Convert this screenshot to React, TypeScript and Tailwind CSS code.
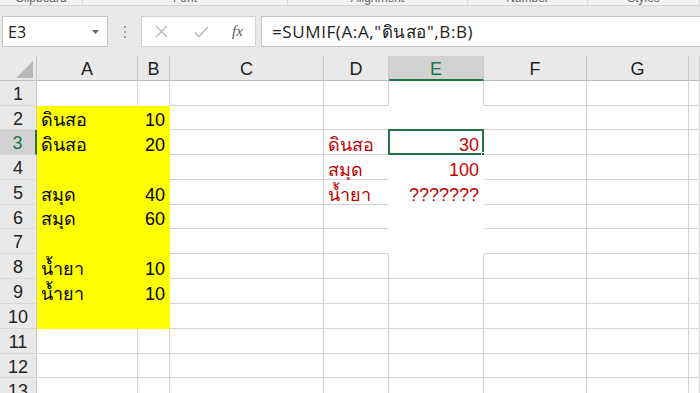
import React from "react";

const COLS = [
  { key: "hdr", w: "w-[37px]" },
  { key: "A", w: "w-[101px]" },
  { key: "B", w: "w-[32px]" },
  { key: "C", w: "w-[154px]" },
  { key: "D", w: "w-[65px]" },
  { key: "E", w: "w-[95px]" },
  { key: "F", w: "w-[103px]" },
  { key: "G", w: "w-[102px]" },
  { key: "H", w: "flex-1" },
];

const ROW_H = [
  "h-[25px]", "h-[24px]", "h-[25px]", "h-[25px]", "h-[25px]", "h-[24px]",
  "h-[25px]", "h-[25px]", "h-[25px]", "h-[25px]", "h-[25px]", "h-[24px]", "h-[25px]",
];

type CellData = { text?: string; right?: boolean; red?: boolean };

const DATA: Record<string, CellData> = {
  A2: { text: "ดินสอ" }, B2: { text: "10", right: true },
  A3: { text: "ดินสอ" }, B3: { text: "20", right: true },
  A5: { text: "สมุด" }, B5: { text: "40", right: true },
  A6: { text: "สมุด" }, B6: { text: "60", right: true },
  A8: { text: "น้ำยา" }, B8: { text: "10", right: true },
  A9: { text: "น้ำยา" }, B9: { text: "10", right: true },
  D3: { text: "ดินสอ", red: true }, E3: { text: "30", right: true, red: true },
  D4: { text: "สมุด", red: true }, E4: { text: "100", right: true, red: true },
  D5: { text: "น้ำยา", red: true }, E5: { text: "???????", right: true, red: true },
};

const font = "font-['Liberation_Sans','Noto_Sans',Tahoma,sans-serif]";

function cellClasses(col: string, row: number) {
  const yellow = (col === "A" || col === "B") && row >= 2 && row <= 10;
  const whiteE = col === "E" && row >= 2 && row <= 7;
  let bg = "bg-white";
  let br = "border-r-[#d4d4d4]";
  let bb = "border-b-[#d4d4d4]";
  if (yellow) {
    bg = "bg-[#ffff00]";
    br = "border-r-[#ffff00]";
    bb = "border-b-[#ffff00]";
  }
  if ((col === "A" || col === "B") && row === 1) bb = "border-b-white";
  if (whiteE) {
    br = "border-r-white";
    bb = "border-b-white";
  }
  if (col === "E" && row === 1) bb = "border-b-white";
  if (col === "D" && row >= 2 && row <= 7) br = "border-r-white";
  return `${bg} ${br} ${bb}`;
}

function Row({ row }: { row: number }) {
  const selected = row === 3;
  return (
    <div className={`flex ${ROW_H[row - 1]} shrink-0`}>
      {COLS.map((c) => {
        if (c.key === "hdr") {
          return (
            <div
              key={c.key}
              className={`${c.w} shrink-0 flex items-center justify-center border-b border-b-[#d9d9d9] ${
                selected
                  ? "bg-[#d2d2d2] text-[#217346] border-r-2 border-r-[#217346]"
                  : "bg-[#e9e9e9] text-[#222] border-r border-r-[#c8c8c8]"
              } text-[18px] leading-none pt-[2px]`}
            >
              {row}
            </div>
          );
        }
        const id = `${c.key}${row}`;
        const d = DATA[id];
        return (
          <div
            key={c.key}
            className={`${c.w} shrink-0 relative border-r border-b ${cellClasses(c.key, row)} flex items-end ${
              d?.right ? "justify-end pr-[4px]" : "justify-start pl-[4px]"
            } pb-[0px] text-[18px] leading-none whitespace-nowrap ${d?.red ? "text-[#c00000]" : "text-black"}`}
          >
            {d?.text}
            {id === "E3" && (
              <>
                <div className="absolute -left-[1px] -top-[1px] -right-[1px] -bottom-[1px] border-2 border-[#217346]" />
                <div className="absolute -right-[4px] -bottom-[4px] w-[6px] h-[6px] bg-[#217346] border border-white" />
              </>
            )}
          </div>
        );
      })}
    </div>
  );
}

export default function App() {
  const labels = [
    { t: "Clipboard", w: "w-[83px]" },
    { t: "Font", w: "w-[205px]" },
    { t: "Alignment", w: "w-[180px]" },
    { t: "Number", w: "w-[120px]" },
    { t: "Styles", w: "flex-1" },
  ];
  return (
    <div className={`w-[700px] h-[393px] overflow-hidden bg-white flex flex-col ${font}`}>
      {/* ribbon bottom strip */}
      <div className="h-[5px] shrink-0 bg-[#f3f3f3] overflow-hidden flex">
        {labels.map((l, i) => (
          <div key={i} className={`${l.w} shrink-0 flex justify-center border-r border-r-[#dadada] -mt-[9px] h-[14px]`}>
            <span className="text-[12px] leading-[14px] text-[#666]">{l.t}</span>
          </div>
        ))}
      </div>
      <div className="h-[1px] shrink-0 bg-[#d5d5d5]" />
      {/* formula bar */}
      <div className="shrink-0 bg-[#e9e9e9] pt-[10px] pb-[9px]">
        <div className="flex h-[31px]">
          <div className="ml-[2px] w-[106px] shrink-0 bg-white border border-[#c6c6c6] flex items-center justify-between pl-[5px] pr-[8px]">
            <span className="text-[16px] text-[#222] font-['Open_Sans',sans-serif]">E3</span>
            <svg width="7" height="4" viewBox="0 0 7 4"><path d="M0 0h7L3.5 4z" fill="#666" /></svg>
          </div>
          <div className="w-[33px] shrink-0 flex items-center justify-center">
            <div className="flex flex-col gap-[3px]">
              <div className="w-[2px] h-[2px] bg-[#9a9a9a]" />
              <div className="w-[2px] h-[2px] bg-[#9a9a9a]" />
              <div className="w-[2px] h-[2px] bg-[#9a9a9a]" />
            </div>
          </div>
          <div className="w-[115px] shrink-0 bg-white border border-[#d0d0d0] flex items-center">
            <svg className="ml-[13px]" width="13" height="13" viewBox="0 0 13 13">
              <path d="M1 1L12 12M12 1L1 12" stroke="#b8b8b8" strokeWidth="1.3" />
            </svg>
            <svg className="ml-[26px]" width="15" height="12" viewBox="0 0 15 12">
              <path d="M1 6.5L5 10.5L14 1" stroke="#b8b8b8" strokeWidth="1.5" fill="none" />
            </svg>
            <span className="ml-[23px] text-[15px] italic text-[#555] font-['Liberation_Serif',serif]">fx</span>
          </div>
          <div className="ml-[5px] flex-1 bg-white border border-r-0 border-[#c6c6c6] flex items-center pl-[10px]">
            <span className="text-[17px] tracking-[0.6px] text-[#222] font-['Open_Sans','Noto_Sans',sans-serif]">=SUMIF(A:A,"ดินสอ",B:B)</span>
          </div>
        </div>
      </div>
      {/* column headers */}
      <div className="flex h-[25px] shrink-0 bg-[#e9e9e9]">
        {COLS.map((c) => {
          if (c.key === "hdr") {
            return (
              <div key={c.key} className={`${c.w} shrink-0 relative border-r border-r-[#c8c8c8] border-b border-b-[#bdbdbd]`}>
                <svg className="absolute left-[16px] top-[5px]" width="17" height="17" viewBox="0 0 17 17">
                  <path d="M17 0V17H0Z" fill="#b8b8b8" />
                </svg>
              </div>
            );
          }
          const sel = c.key === "E";
          return (
            <div
              key={c.key}
              className={`${c.w} shrink-0 flex items-center justify-center text-[18px] leading-none pt-[2px] ${
                sel
                  ? "bg-[#d2d2d2] text-[#217346] border-b-2 border-b-[#217346] border-r border-r-[#c8c8c8]"
                  : "text-[#222] border-b border-b-[#bdbdbd] border-r border-r-[#c8c8c8]"
              }`}
            >
              {c.key === "H" ? "" : c.key}
            </div>
          );
        })}
      </div>
      {Array.from({ length: 13 }, (_, i) => (
        <Row key={i} row={i + 1} />
      ))}
    </div>
  );
}
